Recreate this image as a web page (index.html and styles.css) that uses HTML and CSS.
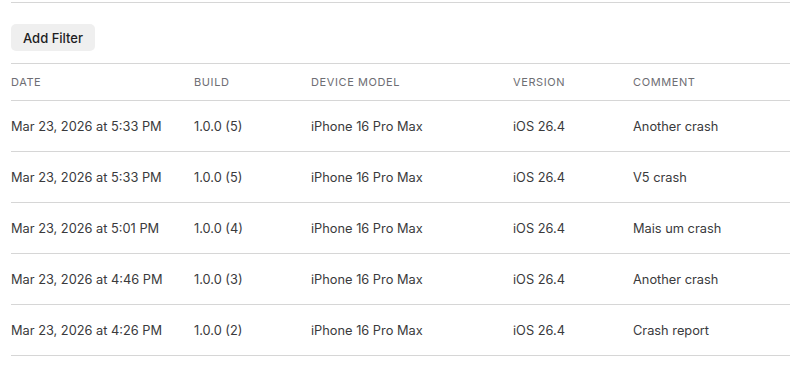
FILE: index.html
```html
<!DOCTYPE html>
<html lang="en">
<head>
    <meta charset="UTF-8">
    <title>Crash Reports</title>
    <link rel="stylesheet" href="styles.css">
</head>
<body>
    <div class="page">
        <div class="toolbar">
            <button class="filter-btn">Add Filter</button>
        </div>

        <!-- Feedback table -->
        <table class="report-table">
            <thead>
                <tr>
                    <th class="col-date">Date</th>
                    <th class="col-build">Build</th>
                    <th class="col-device">Device Model</th>
                    <th class="col-version">Version</th>
                    <th>Comment</th>
                </tr>
            </thead>
            <tbody>
                <tr>
                    <td>Mar 23, 2026 at 5:33 PM</td>
                    <td>1.0.0 (5)</td>
                    <td>iPhone 16 Pro Max</td>
                    <td>iOS 26.4</td>
                    <td>Another crash</td>
                </tr>
                <tr>
                    <td>Mar 23, 2026 at 5:33 PM</td>
                    <td>1.0.0 (5)</td>
                    <td>iPhone 16 Pro Max</td>
                    <td>iOS 26.4</td>
                    <td>V5 crash</td>
                </tr>
                <tr>
                    <td>Mar 23, 2026 at 5:01 PM</td>
                    <td>1.0.0 (4)</td>
                    <td>iPhone 16 Pro Max</td>
                    <td>iOS 26.4</td>
                    <td>Mais um crash</td>
                </tr>
                <tr>
                    <td>Mar 23, 2026 at 4:46 PM</td>
                    <td>1.0.0 (3)</td>
                    <td>iPhone 16 Pro Max</td>
                    <td>iOS 26.4</td>
                    <td>Another crash</td>
                </tr>
                <tr>
                    <td>Mar 23, 2026 at 4:26 PM</td>
                    <td>1.0.0 (2)</td>
                    <td>iPhone 16 Pro Max</td>
                    <td>iOS 26.4</td>
                    <td>Crash report</td>
                </tr>
            </tbody>
        </table>
    </div>
</body>
</html>
```

FILE: styles.css
```css
* {
    margin: 0;
    padding: 0;
    box-sizing: border-box;
}

body {
    background-color: #ffffff;
    font-family: Inter, "Liberation Sans", sans-serif;
    color: #3a3a3c;
}

.page {
    padding: 2px 0 0 11px;
}

.toolbar {
    border-top: 1px solid #d6d6d6;
    padding: 21px 0 12px;
}

.filter-btn {
    height: 27px;
    padding: 0 12px;
    font-family: inherit;
    font-size: 13px;
    font-weight: 500;
    color: #1d1d1f;
    background-color: #efefef;
    border: none;
    border-radius: 5px;
}

.report-table {
    width: 100%;
    border-collapse: collapse;
    table-layout: fixed;
}

.report-table th,
.report-table td {
    text-align: left;
    border-bottom: 1px solid #d6d6d6;
    white-space: nowrap;
}

.report-table thead tr {
    border-top: 1px solid #d6d6d6;
}

.report-table th {
    height: 37px;
    font-size: 11px;
    font-weight: 400;
    letter-spacing: 0.6px;
    text-transform: uppercase;
    color: #6e6e73;
}

.report-table td {
    height: 51px;
    font-size: 12.8px;
}

.col-date { width: 183px; }
.col-build { width: 117px; }
.col-device { width: 202px; }
.col-version { width: 120px; }
```
